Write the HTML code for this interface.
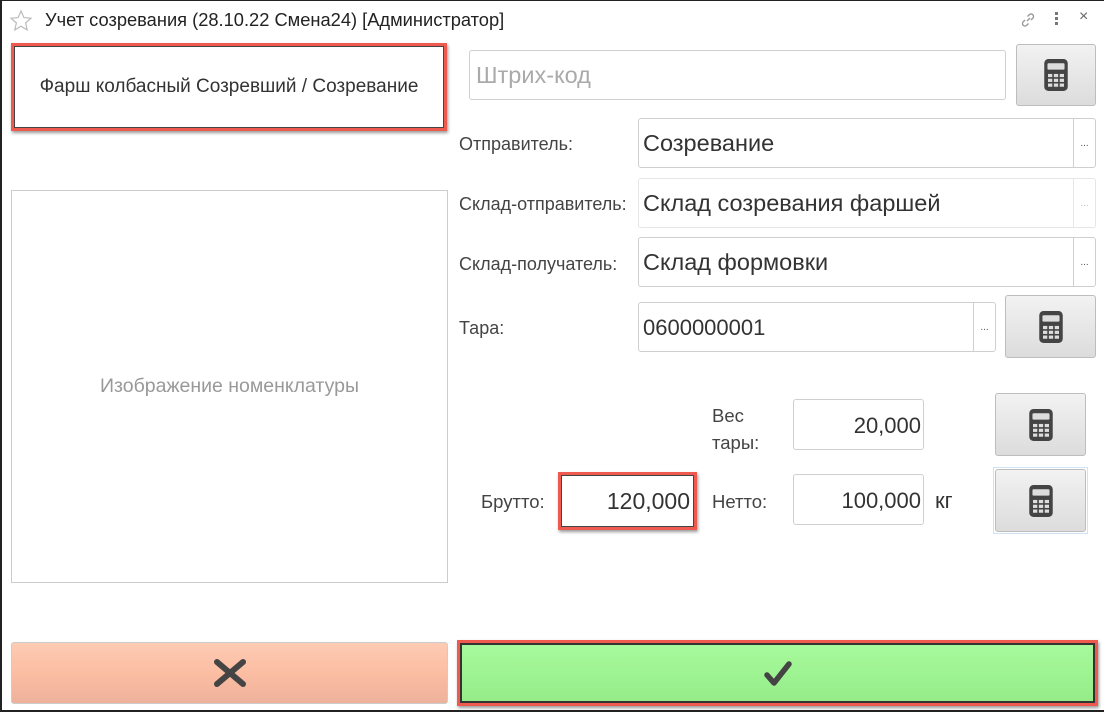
<!DOCTYPE html>
<html><head><meta charset="utf-8">
<style>
*{box-sizing:border-box;margin:0;padding:0}
body{width:1104px;height:712px;background:#fff;font-family:"Liberation Sans","Noto Sans CJK SC",sans-serif;position:relative;overflow:hidden;color:#333}
.a{position:absolute}
.win{left:0;top:0;width:1104px;height:712px;border-left:2px solid #222;border-top:1px solid #222;border-bottom:2px solid #222}
.inp{position:absolute;border:1px solid #cfcfcf;border-radius:3px;background:#fff}
.btn{position:absolute;border:1px solid #bdbdbd;border-radius:3px;background:linear-gradient(#f2f2f2,#dcdcdc);display:flex;align-items:center;justify-content:center}
.lbl{position:absolute;font-size:18px;color:#444;white-space:nowrap}
.big{font-size:23.5px;color:#333;position:absolute;left:4px;white-space:nowrap}
.dots{position:absolute;right:0;top:0;bottom:0;width:22px;border-left:1px solid #cfcfcf;font-size:10px;color:#555;text-align:center}
</style></head><body>
<div class="a win"></div>
<svg class="a" style="left:9px;top:9px" width="24" height="24" viewBox="0 0 24 24"><path d="M12 2l2.9 6.6 7.1.6-5.4 4.7 1.6 7-6.2-3.7-6.2 3.7 1.6-7L2 9.2l7.1-.6z" fill="none" stroke="#bbb" stroke-width="1.2"/></svg>
<div class="a" style="left:45px;top:9px;font-size:18.3px;color:#222;white-space:nowrap">Учет созревания (28.10.22 Смена24) [Администратор]</div>
<svg class="a" style="left:1019px;top:11px" width="18" height="18" viewBox="0 0 18 18"><path d="M8 10l3-3M6 9l-2 2a2.5 2.5 0 0 0 3.5 3.5l2-2M12 9l2-2a2.5 2.5 0 0 0-3.5-3.5l-2 2" fill="none" stroke="#999" stroke-width="1.4"/></svg>
<div class="a" style="left:1055px;top:12px;width:3px"><div style="width:3px;height:3px;background:#777;margin-bottom:2px"></div><div style="width:3px;height:3px;background:#777;margin-bottom:2px"></div><div style="width:3px;height:3px;background:#777"></div></div>
<div class="a" style="left:1079px;top:8px;font-size:16px;color:#666">×</div>

<div class="a" style="left:11px;top:43px;width:436px;height:88px;border:3px solid #ef5a4e;box-shadow:inset 0 0 0 1px #444,1px 2px 3px rgba(0,0,0,.4);display:flex;align-items:center;justify-content:center;font-size:19px;color:#333;white-space:nowrap">Фарш колбасный Созревший / Созревание</div>

<div class="inp" style="left:469px;top:50px;width:537px;height:50px"><span class="big" style="top:11px;left:6px;color:#aaa">Штрих-код</span></div>
<div class="btn" style="left:1016px;top:44px;width:80px;height:62px"><svg width="24" height="32" viewBox="0 0 22 30"><rect width="22" height="30" rx="4" fill="#444"/><rect x="3" y="4" width="16" height="6" rx="1" fill="#ddd"/><g fill="#ddd"><rect x="3.5" y="14" width="4" height="3"/><rect x="9" y="14" width="4" height="3"/><rect x="14.5" y="14" width="4" height="3"/><rect x="3.5" y="18.5" width="4" height="3"/><rect x="9" y="18.5" width="4" height="3"/><rect x="14.5" y="18.5" width="4" height="3"/><rect x="3.5" y="23" width="4" height="3"/><rect x="9" y="23" width="4" height="3"/><rect x="14.5" y="23" width="4" height="3"/></g></svg></div>

<div class="lbl" style="left:459px;top:134px">Отправитель:</div>
<div class="inp" style="left:638px;top:118px;width:458px;height:50px"><span class="big" style="top:11px">Созревание</span><div class="dots" style="line-height:50px">...</div></div>
<div class="lbl" style="left:459px;top:194px">Склад-отправитель:</div>
<div class="inp" style="left:638px;top:178px;width:458px;height:50px;border-color:#e6e6e6"><span class="big" style="top:11px">Склад созревания фаршей</span><div class="dots" style="line-height:50px;border-color:#e6e6e6;color:#bbb">...</div></div>
<div class="lbl" style="left:459px;top:254px">Склад-получатель:</div>
<div class="inp" style="left:638px;top:237px;width:458px;height:50px"><span class="big" style="top:11px">Склад формовки</span><div class="dots" style="line-height:50px">...</div></div>
<div class="lbl" style="left:459px;top:318px">Тара:</div>
<div class="inp" style="left:638px;top:302px;width:358px;height:50px"><span class="big" style="top:12px;font-size:22px">0600000001</span><div class="dots" style="line-height:50px">...</div></div>
<div class="btn" style="left:1005px;top:295px;width:91px;height:63px"><svg width="24" height="32" viewBox="0 0 22 30"><rect width="22" height="30" rx="4" fill="#444"/><rect x="3" y="4" width="16" height="6" rx="1" fill="#ddd"/><g fill="#ddd"><rect x="3.5" y="14" width="4" height="3"/><rect x="9" y="14" width="4" height="3"/><rect x="14.5" y="14" width="4" height="3"/><rect x="3.5" y="18.5" width="4" height="3"/><rect x="9" y="18.5" width="4" height="3"/><rect x="14.5" y="18.5" width="4" height="3"/><rect x="3.5" y="23" width="4" height="3"/><rect x="9" y="23" width="4" height="3"/><rect x="14.5" y="23" width="4" height="3"/></g></svg></div>

<div class="a" style="left:11px;top:190px;width:437px;height:393px;border:1px solid #ccc;display:flex;align-items:center;justify-content:center;font-size:19.5px;color:#999;white-space:nowrap">Изображение номенклатуры</div>

<div class="lbl" style="left:712px;top:402px;line-height:27px;font-size:18.5px">Вес<br>тары:</div>
<div class="inp" style="left:793px;top:399px;width:131px;height:51px;text-align:right;padding-right:2px;font-size:22px;line-height:51px">20,000</div>
<div class="btn" style="left:995px;top:393px;width:91px;height:63px"><svg width="24" height="32" viewBox="0 0 22 30"><rect width="22" height="30" rx="4" fill="#444"/><rect x="3" y="4" width="16" height="6" rx="1" fill="#ddd"/><g fill="#ddd"><rect x="3.5" y="14" width="4" height="3"/><rect x="9" y="14" width="4" height="3"/><rect x="14.5" y="14" width="4" height="3"/><rect x="3.5" y="18.5" width="4" height="3"/><rect x="9" y="18.5" width="4" height="3"/><rect x="14.5" y="18.5" width="4" height="3"/><rect x="3.5" y="23" width="4" height="3"/><rect x="9" y="23" width="4" height="3"/><rect x="14.5" y="23" width="4" height="3"/></g></svg></div>

<div class="lbl" style="left:481px;top:491px;font-size:18.5px">Брутто:</div>
<div class="a" style="left:558px;top:472px;width:139px;height:58px;border:3px solid #ef5a4e;box-shadow:inset 0 0 0 1px #444,1px 2px 3px rgba(0,0,0,.4);text-align:right;padding-right:4px;font-size:23px;line-height:52px;color:#333">120,000</div>
<div class="lbl" style="left:712px;top:491px;font-size:18.5px">Нетто:</div>
<div class="inp" style="left:793px;top:474px;width:131px;height:51px;text-align:right;padding-right:2px;font-size:22px;line-height:51px">100,000</div>
<div class="lbl" style="left:935px;top:488px;font-size:22px;color:#333">кг</div>
<div class="a" style="left:993px;top:467px;width:95px;height:67px;border:1px solid #cfe3f7"></div>
<div class="btn" style="left:995px;top:469px;width:91px;height:63px"><svg width="24" height="32" viewBox="0 0 22 30"><rect width="22" height="30" rx="4" fill="#444"/><rect x="3" y="4" width="16" height="6" rx="1" fill="#ddd"/><g fill="#ddd"><rect x="3.5" y="14" width="4" height="3"/><rect x="9" y="14" width="4" height="3"/><rect x="14.5" y="14" width="4" height="3"/><rect x="3.5" y="18.5" width="4" height="3"/><rect x="9" y="18.5" width="4" height="3"/><rect x="14.5" y="18.5" width="4" height="3"/><rect x="3.5" y="23" width="4" height="3"/><rect x="9" y="23" width="4" height="3"/><rect x="14.5" y="23" width="4" height="3"/></g></svg></div>

<div class="a" style="left:11px;top:642px;width:437px;height:62px;border:1px solid #ccc;border-radius:3px;background:linear-gradient(#fdcbb3,#fbbea3 50%,#eeb19b);display:flex;align-items:center;justify-content:center"><svg width="34" height="28" viewBox="0 0 34 28"><path d="M4 3l26 22M30 3L4 25" stroke="#444" stroke-width="6" stroke-linecap="round"/></svg></div>
<div class="a" style="left:457px;top:640px;width:641px;height:66px;border:3px solid #ef5a4e;box-shadow:inset 0 0 0 2px #333,1px 2px 3px rgba(0,0,0,.4);background:linear-gradient(#a8fa9c,#94ec88);display:flex;align-items:center;justify-content:center"><svg width="30" height="26" viewBox="0 0 30 26"><path d="M4 15l7 8L26 4" fill="none" stroke="#444" stroke-width="5.5" stroke-linecap="round" stroke-linejoin="round"/></svg></div>
</body></html>
